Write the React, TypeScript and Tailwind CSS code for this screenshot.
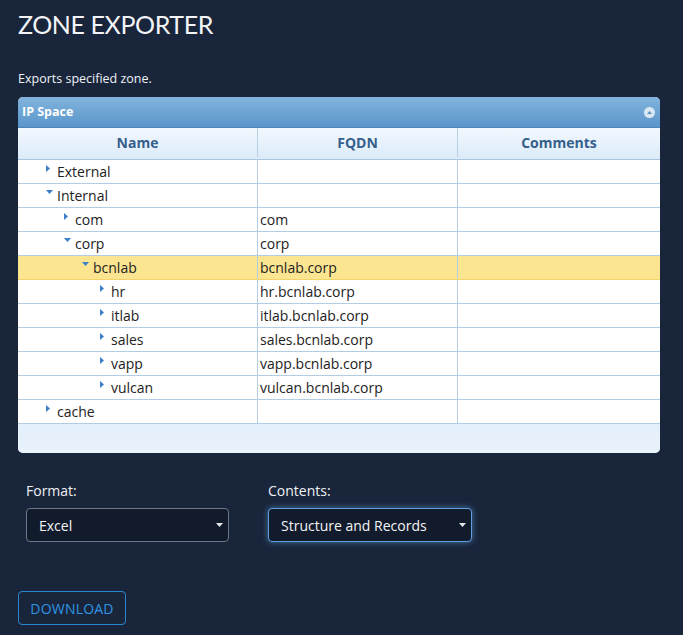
import React from "react";

type Row = { name: string; fqdn: string; level: number; open?: boolean; selected?: boolean };

const rows: Row[] = [
  { name: "External", fqdn: "", level: 0 },
  { name: "Internal", fqdn: "", level: 0, open: true },
  { name: "com", fqdn: "com", level: 1 },
  { name: "corp", fqdn: "corp", level: 1, open: true },
  { name: "bcnlab", fqdn: "bcnlab.corp", level: 2, open: true, selected: true },
  { name: "hr", fqdn: "hr.bcnlab.corp", level: 3 },
  { name: "itlab", fqdn: "itlab.bcnlab.corp", level: 3 },
  { name: "sales", fqdn: "sales.bcnlab.corp", level: 3 },
  { name: "vapp", fqdn: "vapp.bcnlab.corp", level: 3 },
  { name: "vulcan", fqdn: "vulcan.bcnlab.corp", level: 3 },
  { name: "cache", fqdn: "", level: 0 },
];

const indent = ["pl-[28px]", "pl-[46px]", "pl-[64px]", "pl-[82px]"];

function Arrow({ open }: { open?: boolean }) {
  return open ? (
    <svg width="7" height="4" viewBox="0 0 7 4" className="mt-[-6px]">
      <path d="M0 0h7L3.5 4z" fill="#3b7fc8" />
    </svg>
  ) : (
    <svg width="4" height="7" viewBox="0 0 4 7" className="mt-[-6px]">
      <path d="M0 0l4 3.5L0 7z" fill="#3b7fc8" />
    </svg>
  );
}

function Caret() {
  return (
    <svg width="7" height="4" viewBox="0 0 7 4">
      <path d="M0 0h7L3.5 4z" fill="#e5e7eb" />
    </svg>
  );
}

export default function App() {
  return (
    <div className="min-h-screen bg-[#19253a] font-['Open_Sans',sans-serif] px-[18px] pt-[7px] pb-[10px]">
      <h1 className="text-[25px] leading-[34px] font-normal tracking-[-0.4px] text-[#f2f4f7] font-['Lato','Open_Sans',sans-serif]">
        ZONE EXPORTER
      </h1>
      <p className="mt-[29px] text-[12.5px] leading-[18px] text-[#eef1f5]">Exports specified zone.</p>

      {/* IP Space panel */}
      <div className="mt-[9px] w-[642px] rounded-[5px] overflow-hidden bg-[#e6f1fb]">
        <div className="h-[31px] flex items-center justify-between px-[4px] bg-gradient-to-b from-[#82b4dd] to-[#5a95ca] border-b border-[#4b86bd]">
          <span className="text-[12.5px] font-bold text-white">IP Space</span>
          <span className="w-[11px] h-[11px] rounded-full bg-[#dbe8f4] flex items-center justify-center mr-[1px]">
            <svg width="5" height="3" viewBox="0 0 5 3">
              <path d="M0 3h5L2.5 0z" fill="#5a8fc2" />
            </svg>
          </span>
        </div>
        <div className="grid grid-cols-[240px_200px_1fr] h-[32px] pb-[2px] bg-gradient-to-b from-[#f2f8fe] to-[#dcebf9] border-b border-[#a9c7e2] text-[14px] font-bold text-[#365f8c]">
          <div className="flex items-center justify-center border-r border-[#b9d1e7]">Name</div>
          <div className="flex items-center justify-center border-r border-[#b9d1e7]">FQDN</div>
          <div className="flex items-center justify-center">Comments</div>
        </div>
        <div className="bg-white">
          {rows.map((r) => (
            <div
              key={r.name}
              className={`grid grid-cols-[240px_200px_1fr] h-[24px] border-b text-[14px] text-[#222] ${
                r.selected ? "bg-[#fbe590] border-[#f2d46a]" : "border-[#b3cde4]"
              }`}
            >
              <div className={`flex items-center border-r border-[#b3cde4] ${indent[r.level]}`}>
                <span className="w-[11px] flex justify-start">
                  <Arrow open={r.open} />
                </span>
                <span>{r.name}</span>
              </div>
              <div className="flex items-center pl-[2px] border-r border-[#b3cde4]">{r.fqdn}</div>
              <div />
            </div>
          ))}
        </div>
        <div className="h-[29px] bg-gradient-to-b from-[#e3effb] to-[#e9f2fb]" />
      </div>

      {/* Options */}
      <div className="mt-[28px] ml-[8px] flex gap-[39px]">
        <div className="w-[203px]">
          <div className="text-[14px] text-[#eef1f5] leading-[20px]">Format:</div>
          <div className="mt-[7px] h-[34px] rounded-[4px] border border-[#6f7784] bg-[#121b2c] flex items-center justify-between pl-[12px] pr-[5px] text-[14px] font-medium text-[#f3f4f6]">
            <span>Excel</span>
            <Caret />
          </div>
        </div>
        <div className="w-[204px]">
          <div className="text-[14px] text-[#eef1f5] leading-[20px]">Contents:</div>
          <div className="mt-[7px] h-[34px] rounded-[4px] border border-[#5f9ee0] bg-[#121b2c] shadow-[0_0_6px_rgba(102,170,240,0.6)] flex items-center justify-between pl-[12px] pr-[5px] text-[14px] font-medium text-[#f3f4f6]">
            <span>Structure and Records</span>
            <Caret />
          </div>
        </div>
      </div>

      <button className="mt-[49px] h-[34px] w-[108px] rounded-[4px] border border-[#2a86cf] text-[14px] text-[#2f95e4] tracking-[0.2px]">
        DOWNLOAD
      </button>
    </div>
  );
}
